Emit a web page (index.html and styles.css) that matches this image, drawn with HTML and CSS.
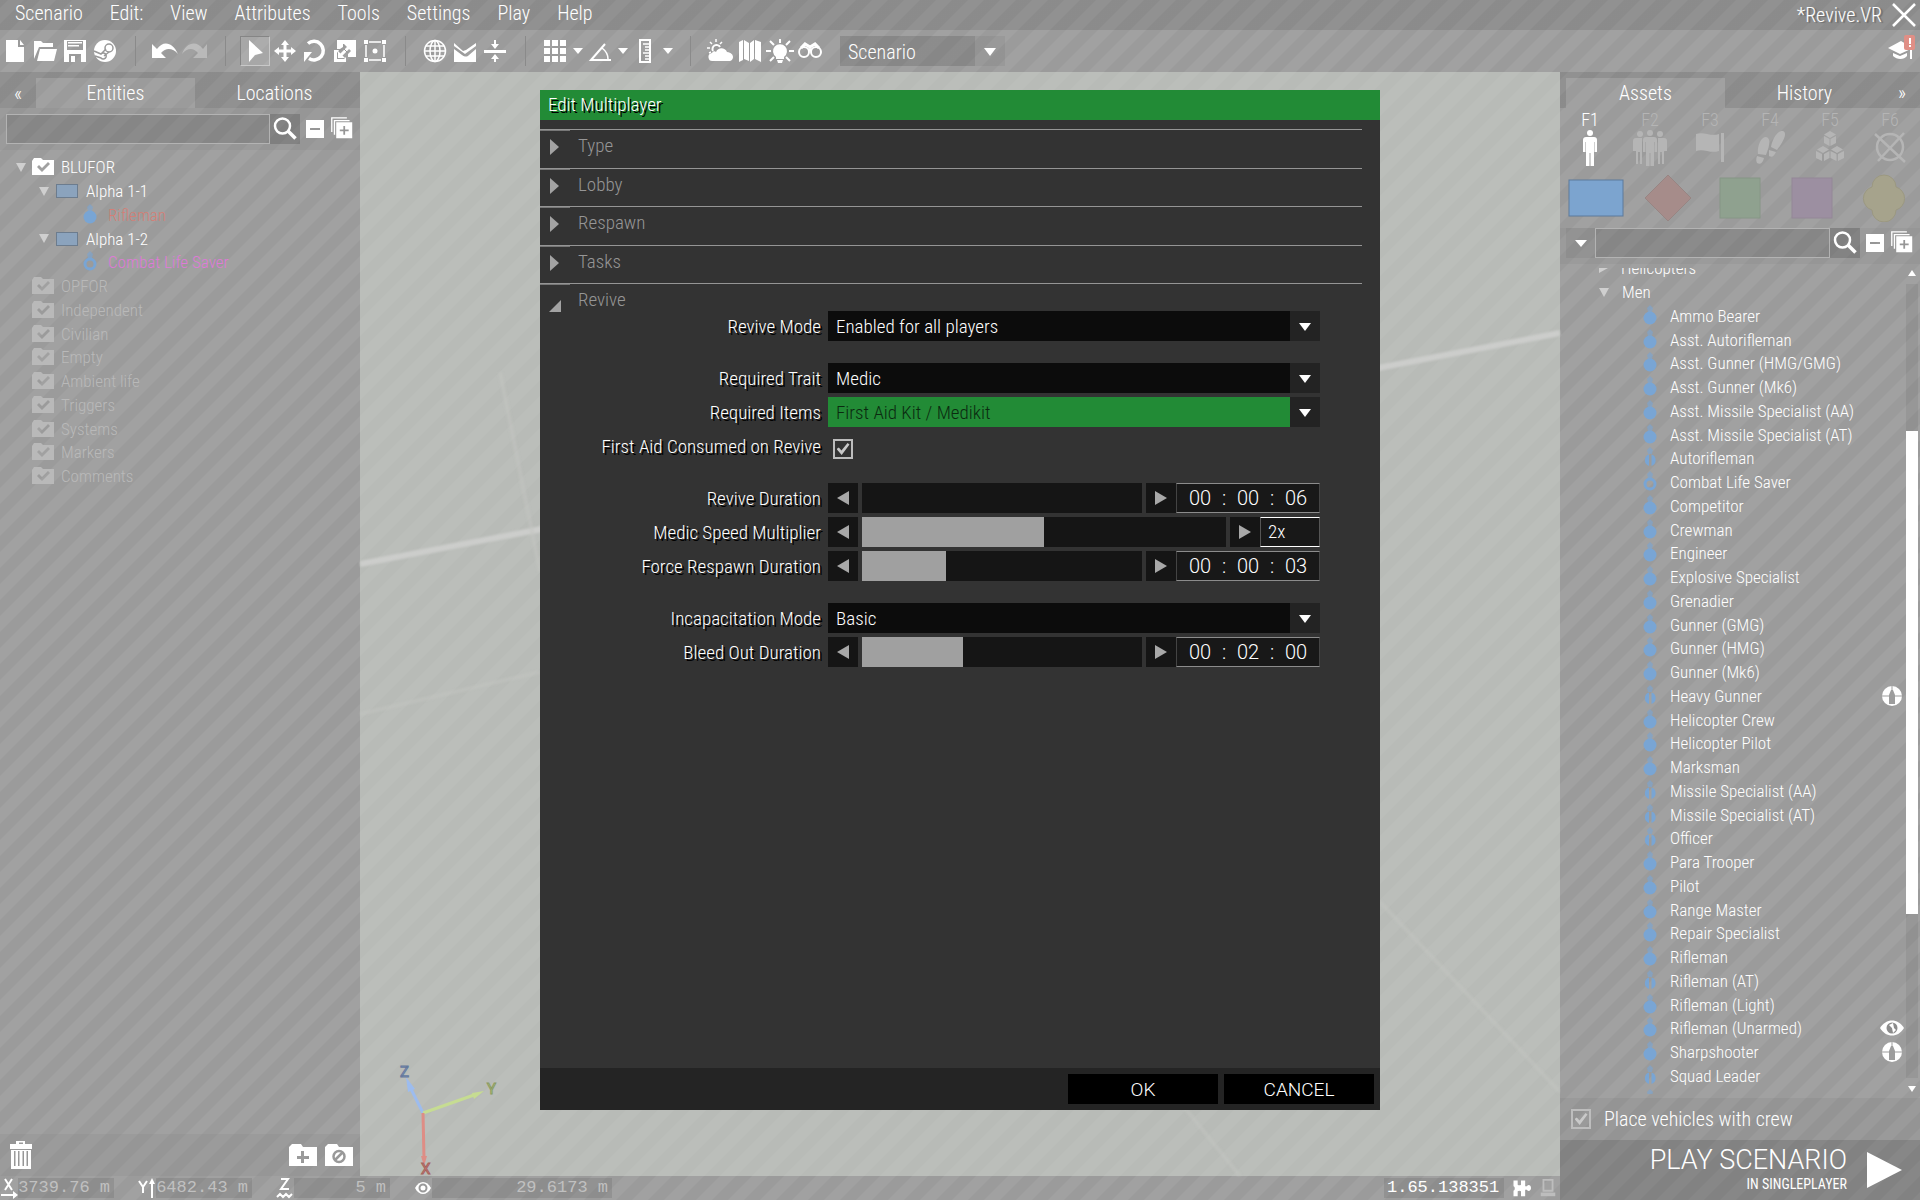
FILE: index.html
```html
<!DOCTYPE html>
<html lang="en">
<head>
<meta charset="utf-8">
<title>*Revive.VR</title>
<link rel="stylesheet" href="styles.css">
</head>
<body>
<svg class="defs" aria-hidden="true">
  <symbol id="unit" viewBox="0 0 24 24"><circle cx="12" cy="14" r="6.500"/><path d="M12 1l3 3-1 4h-4L9 4z" opacity=".6"/></symbol>
  <symbol id="unit-ring" viewBox="0 0 24 24"><circle cx="12" cy="14" r="5" fill="none" stroke="currentColor" stroke-width="3"/><path d="M12 1l3 3-1 4h-4L9 4z" opacity=".6"/></symbol>
  <symbol id="unit-split" viewBox="0 0 24 24"><path d="M11 8.500v11.400A6 6 0 0 1 11 8.500zM13.500 8.500v11.400a6 6 0 0 0 0-11.400z"/><path d="M12 1l3 3-1 4h-4L9 4z" opacity=".6"/></symbol>
  <symbol id="folder" viewBox="0 0 24 24"><path fill-rule="evenodd" d="M1 6l2-3h7l2 2h11v15H1zM6 12l5 5 8-8-2-2-6 6-3-3z"/></symbol>
  <symbol id="search" viewBox="0 0 24 24"><circle cx="9.500" cy="9" r="7.500" fill="none" stroke="currentColor" stroke-width="2.500"/><path d="M15 14l7.500 7.500" stroke="currentColor" stroke-width="3.500"/></symbol>
  <symbol id="minus" viewBox="0 0 24 24"><path fill-rule="evenodd" d="M3 3h18v18H3zM7 11v2h10v-2z"/></symbol>
  <symbol id="plus" viewBox="0 0 25 27"><path d="M1 17V1h17M4 20V4h17" fill="none" stroke="currentColor" stroke-width="1.500"/><path fill-rule="evenodd" d="M6 6h18v18H6zM14 10v4h-4v2h4v4h2v-4h4v-2h-4v-4z"/></symbol>
  <symbol id="target" viewBox="0 0 24 24"><circle cx="12" cy="12" r="10"/><path d="M2 12h20M12 2v5" stroke="#9d9d9d" stroke-width="1"/><path d="M9 20v-9l2-5h2l2 5v9z" fill="#9d9d9d"/></symbol>
</svg>

<header class="menubar">
  <nav>
    <button>Scenario</button><button>Edit:</button><button>View</button><button>Attributes</button><button>Tools</button><button>Settings</button><button>Play</button><button>Help</button>
  </nav>
  <span class="mission">*Revive.VR</span>
  <button class="close" aria-label="Close"><svg viewBox="0 0 24 24"><path d="M1 1l22 22M23 1L1 23" stroke="currentColor" stroke-width="2.500"/></svg></button>
</header>

<div class="toolbar">
  <button class="tool" aria-label="New"><svg viewBox="0 0 24 24"><path d="M3 1h12v7h6v15H3zM17 1l4 5h-4z"/></svg></button>
  <button class="tool" aria-label="Open"><svg viewBox="0 0 24 24"><path d="M1 20V2h7l2 2h10v4H6zM4 22L7 10h17l-3 12z"/></svg></button>
  <button class="tool" aria-label="Save"><svg viewBox="0 0 24 24"><path fill-rule="evenodd" d="M1 1h22v22H1zM4 2v9h16V2zM6 15v8h12v-8zM8 17h4v6H8z"/><path d="M5 3h14v1.500H5zM5 6h11v1.500H5z"/></svg></button>
  <button class="tool" aria-label="Workshop"><svg viewBox="0 0 24 24"><circle cx="12" cy="12" r="11"/><circle cx="16" cy="9" r="4" fill="none" stroke="#999" stroke-width="1.500"/><path d="M1 12l7 3a3 3 0 1 1 0 4l-6-2M8 15l5-5M11 17l5-4" fill="none" stroke="#999" stroke-width="1.500"/></svg></button>
  <span class="sep"></span>
  <button class="tool wide" aria-label="Undo"><svg viewBox="0 0 28 24"><path d="M1 5v14h14l-5-5c5-6 12-5 17 1C22 3 12 1 6 10z"/></svg></button>
  <button class="tool wide" disabled aria-label="Redo"><svg viewBox="0 0 28 24"><path d="M26 5v14H12l5-5C12 8 6 9 1 15 5 3 16 1 22 10z"/></svg></button>
  <span class="sep"></span>
  <button class="tool active" aria-label="Select"><svg viewBox="0 0 24 24"><path d="M6 1l14 13-8 2-6 7z"/></svg></button>
  <button class="tool" aria-label="Move"><svg viewBox="0 0 24 24"><path d="M12 1l4 5h-2.500v4.500H18V8l5 4-5 4v-2.500h-4.500V18H16l-4 5-4-5h2.500v-4.500H6V16l-5-4 5-4v2.500h4.500V6H8z"/></svg></button>
  <button class="tool" aria-label="Rotate"><svg viewBox="0 0 24 24"><path d="M5 4.500a9.300 9.300 0 1 1 1 15" fill="none" stroke="currentColor" stroke-width="3.500"/><path d="M1 23V13h8z"/></svg></button>
  <button class="tool" aria-label="Scale"><svg viewBox="0 0 24 24"><path fill-rule="evenodd" d="M4 1h19v17h-8v-3l3-3V5h-8v3l-3 2H4z"/><path fill-rule="evenodd" d="M1 11h5l-2 3v6h7l2-2v5H1z"/><path d="M6 18l11-11" stroke="currentColor" stroke-width="3"/><path d="M11 5h8v8zM5 12v7h7z"/><path d="M11 10l4 4" stroke="#999" stroke-width="1"/></svg></button>
  <button class="tool" aria-label="Area"><svg viewBox="0 0 24 24"><path d="M3 6v12M21 6v12M6 3h12M6 21h12" stroke="currentColor" stroke-width="1.500"/><path d="M1 1h4v4H1zM19 1h4v4h-4zM1 19h4v4H1zM19 19h4v4h-4z"/><circle cx="12" cy="12" r="2.500"/></svg></button>
  <span class="sep"></span>
  <button class="tool" aria-label="Coordinate space"><svg viewBox="0 0 24 24" fill="none" stroke="currentColor" stroke-width="1.500"><circle cx="12" cy="12" r="10.500"/><ellipse cx="12" cy="12" rx="5" ry="10.500"/><path d="M12 1v22M1 12h22M3 7h18M3 17h18"/></svg></button>
  <button class="tool" aria-label="Surface snapping"><svg viewBox="0 0 24 24"><path d="M1 4l9 8 3-1 10-7v3L12 15 1 7z"/><path d="M1 10l8 6c3 2 5 2 7 0l7-6v13H1z"/></svg></button>
  <button class="tool" aria-label="Vertical mode"><svg viewBox="0 0 24 24"><path d="M1 11h22v3H1zM11 1h2v4h3l-4 5-4-5h3zM11 23h2v-3h3l-4-5-4 5h3z"/></svg></button>
  <span class="sep"></span>
  <button class="tool" aria-label="Grid"><svg viewBox="0 0 24 24"><path d="M1 1h6v6H1zM9 1h6v6H9zM17 1h6v6h-6zM1 9h6v6H1zM9 9h6v6H9zM17 9h6v6h-6zM1 17h6v6H1zM9 17h6v6H9zM17 17h6v6h-6z"/></svg></button>
  <button class="tool drop" aria-label="Grid size"><i class="caret"></i></button>
  <button class="tool" aria-label="Angle"><svg viewBox="0 0 24 24" fill="none" stroke="currentColor" stroke-width="2"><path d="M17 5L3 21h20"/><path d="M14 9c4 3 6 6 6 11" stroke-width="1.500"/></svg></button>
  <button class="tool drop" aria-label="Angle step"><i class="caret"></i></button>
  <button class="tool" aria-label="Scale snapping"><svg viewBox="0 0 24 24" fill="none" stroke="currentColor" stroke-width="2"><path d="M7 1h10v22H7z"/><path d="M10 5h6M12 8h4M12 11h4M10 14h6M12 17h4M12 20h4" stroke-width="1.500"/></svg></button>
  <button class="tool drop" aria-label="Scale step"><i class="caret"></i></button>
  <span class="sep"></span>
  <button class="tool wide" aria-label="Weather"><svg viewBox="0 0 28 24"><path d="M7 22a4 4 0 0 1-1-8c1-2 3-2 4-1 2-5 9-5 11 0 8 1 7 8 3 9z"/><path d="M7 12a4 4 0 1 1 7-4" fill="none" stroke="currentColor" stroke-width="2"/><path d="M10 0v3M4 3l2 2M16 3l-2 2M1 9h3M3 14l2-1" stroke="currentColor" stroke-width="1.500"/></svg></button>
  <button class="tool" aria-label="Map"><svg viewBox="0 0 24 24"><path d="M1 3l4-2v20l-4 2zM6 1l5 3v18l-5-2zM12 4l4-3v19l-4 3zM17 1l6 2v20l-6-3z"/></svg></button>
  <button class="tool wide" aria-label="Lighting"><svg viewBox="0 0 28 24"><path d="M10 18a7 7 0 1 1 8 0v2h-8zM11 21h6l-1 3h-4z"/><path d="M14 0v4M4 2l4 4M24 2l-4 4M0 12h5M23 12h5M4 22l4-4M24 22l-4-4" stroke="currentColor" stroke-width="2"/></svg></button>
  <button class="tool" aria-label="Vision"><svg viewBox="0 0 24 24" fill="none" stroke="currentColor" stroke-width="2"><circle cx="6" cy="13" r="5"/><circle cx="18" cy="13" r="5"/><path d="M3 9l4-4 5 3 5-3 4 4M10 11h4" stroke-width="3"/></svg></button>
  <div class="select phase"><select aria-label="Phase"><option>Scenario</option></select></div>
  <button class="tutorial" aria-label="Tutorials"><svg viewBox="0 0 28 26"><path d="M1 13l13-7 12 7-13 6z"/><path d="M6 18l7 3 7-3v3c-3 4-10 4-14 0zM23 15h2v9h-2z"/><rect x="17" y="0" width="11" height="15" rx="2" fill="#e08f86"/><path d="M22 3h2v6h-2zM22 10h2v2h-2z"/></svg></button>
</div>

<div class="workspace">
  <div class="stage">
    <div class="canvas">
      <aside class="panel left">
        <div class="tabs"><button class="fold">«</button><button class="tab on">Entities</button><button class="tab">Locations</button></div>
        <div class="find">
          <input type="text" aria-label="Search entities"><button class="go" aria-label="Search"><svg><use href="#search"/></svg></button><button class="mini" aria-label="Collapse all"><svg><use href="#minus"/></svg></button><button class="mini" aria-label="Expand all"><svg><use href="#plus"/></svg></button>
        </div>
        <ul class="tree">
          <li><i class="open"></i><svg><use href="#folder"/></svg>BLUFOR</li>
          <li class="l1"><i class="open"></i><b class="group"></b>Alpha 1-1</li>
          <li class="l2 player"><svg class="u"><use href="#unit"/></svg>Rifleman</li>
          <li class="l1"><i class="open"></i><b class="group"></b>Alpha 1-2</li>
          <li class="l2 playable"><svg class="u"><use href="#unit-ring"/></svg>Combat Life Saver</li>
          <li class="dim"><svg><use href="#folder"/></svg>OPFOR</li>
          <li class="dim"><svg><use href="#folder"/></svg>Independent</li>
          <li class="dim"><svg><use href="#folder"/></svg>Civilian</li>
          <li class="dim"><svg><use href="#folder"/></svg>Empty</li>
          <li class="dim"><svg><use href="#folder"/></svg>Ambient life</li>
          <li class="dim"><svg><use href="#folder"/></svg>Triggers</li>
          <li class="dim"><svg><use href="#folder"/></svg>Systems</li>
          <li class="dim"><svg><use href="#folder"/></svg>Markers</li>
          <li class="dim"><svg><use href="#folder"/></svg>Comments</li>
        </ul>
        <div class="layers">
          <button aria-label="Delete"><svg viewBox="0 0 28 28"><path fill-rule="evenodd" d="M9 0h9v3h7v5H3V3h6zM12 1.500V3h4V1.500zM4 9h20v19H4zM7 10v15h1.500V10zM11 10v15h1.500V10zM15.500 10v15H17V10zM19.500 10v15H21V10z"/></svg></button>
          <span class="grow"></span>
          <button aria-label="New layer"><svg viewBox="0 0 28 28"><path fill-rule="evenodd" d="M0 6l3-3h9l2 3h14v19H0zM12 10v5H8v3h4v4h3v-4h5v-3h-5v-5z"/></svg></button>
          <button aria-label="Remove layer"><svg viewBox="0 0 28 28"><path d="M0 6l3-3h9l2 3h14v19H0z"/><circle cx="14" cy="15.500" r="5.500" fill="none" stroke="#999" stroke-width="2.500"/><path d="M10 19l8-8" stroke="#999" stroke-width="2.500"/></svg></button>
        </div>
      </aside>
      <main class="view">
        <svg class="ground" viewBox="0 0 1200 1104" preserveAspectRatio="none">
          <path d="M0 492L1200 261" stroke="#cccdcb" stroke-width="6"/>
          <path d="M0 642L180 600M1020 830l180 190M820 1030l60 74M140 300l40 200" stroke="#c3c5c2" stroke-width="4" opacity=".5" fill="none"/>
        </svg>
        <svg class="axes" viewBox="0 0 110 117">
          <g fill="none" stroke-width="3"><path d="M33 54L19 26" stroke="#9dbcee"/><path d="M33 54L84 36" stroke="#c6dc92"/><path d="M33 54L34 100" stroke="#de8d85"/></g>
          <path d="M16 18l9 12-7 3z" fill="#9dbcee"/><path d="M94 32l-10 8-2-6z" fill="#c6dc92"/><path d="M34 107l-3-10h6z" fill="#de8d85"/>
          <text x="10" y="18" fill="#90addb" stroke="#66799c">Z</text><text x="97" y="35" fill="#c6dc92" stroke="#8a9a62">Y</text><text x="31" y="115" fill="#de8d85" stroke="#a5625c">X</text>
        </svg>
      </main>
    </div>
    <footer class="status">
      <label for="sx"><svg viewBox="0 0 18 24"><path d="M5 3l7 11M12 3L5 14" stroke="currentColor" stroke-width="2"/><path d="M1 18h12v-3l5 4-5 4v-3H1z"/></svg></label><input id="sx" value="3739.76 m">
      <label for="sy"><svg viewBox="0 0 18 24"><path d="M1 5l4 6 4-6M5 10v7" fill="none" stroke="currentColor" stroke-width="2"/><path d="M14 2l3 6h-2v14h-2V8h-2z"/></svg></label><input id="sy" value="6482.43 m">
      <label for="sz"><svg viewBox="0 0 18 24" fill="none" stroke="currentColor"><path d="M5 3h7L5 13h8" stroke-width="2"/><path d="M1 21l3-3 3 3 3-3 3 3 3-3" stroke-width="2"/></svg></label><input id="sz" value="5 m">
      <label for="sd"><svg viewBox="0 0 18 24"><path d="M1 12c4-8 12-8 16 0-4 8-12 8-16 0z"/><circle cx="9" cy="12" r="3.500" fill="none" stroke="#999" stroke-width="2"/></svg></label><input id="sd" class="long" value="29.6173 m">
      <output>1.65.138351</output>
      <svg class="mod" viewBox="0 0 24 24"><path fill-rule="evenodd" d="M3 3h5v5c1 1 3 1 4 0V3h5v7h2c2-3 5-1 5 2s-3 5-5 2h-2v8h-5v-6c-1-1-3-1-4 0v6H3v-7c2 0 2-5 0-5z"/></svg>
      <svg class="net" viewBox="0 0 18 22" fill="none" stroke="currentColor" stroke-width="2"><path d="M4 2h10v12H4z"/><path d="M1 18h16" stroke-width="4"/></svg>
    </footer>
  </div>

  <aside class="panel right">
    <div class="tabs"><button class="tab on">Assets</button><button class="tab">History</button><button class="fold">»</button></div>
    <div class="modes">
      <button class="on">F1<svg viewBox="0 0 36 36"><circle cx="18" cy="3" r="3"/><path d="M14 7h8c2 0 3 1 3 3v12h-2.500V12H22v24h-3.500V23h-1v13H14V12h-.500v10H11V10c0-2 1-3 3-3z"/></svg></button>
      <button>F2<svg viewBox="0 0 36 36"><circle cx="18" cy="3" r="3"/><path d="M14 7h8c2 0 3 1 3 3v12h-2.500V12H22v24h-3.500V23h-1v13H14V12h-.500v10H11V10c0-2 1-3 3-3z"/><circle cx="8" cy="4" r="3"/><circle cx="28" cy="4" r="3"/><path d="M4 8h6v26H8V22H6v12H4V21H1V11c0-2 1-3 3-3zM32 8h-6v26h2V22h2v12h2V21h3V11c0-2-1-3-3-3z"/></svg></button>
      <button>F3<svg viewBox="0 0 36 36"><path d="M4 4c8-3 14 3 23 0v17c-9 3-15-3-23 0zM29 3h3v29h-3z"/></svg></button>
      <button>F4<svg viewBox="0 0 36 36"><path d="M6 24c-1-6 2-17 8-17 5 1 4 8 0 18zM5 26l7 2c-1 5-4 7-7 5-1-2-1-4 0-7zM19 17c1-7 6-17 12-16 5 2 0 11-6 19zM17 20l7 2c-2 4-4 6-7 4z"/></svg></button>
      <button>F5<svg viewBox="0 0 36 36"><path d="M18 1l6 3.500-6 3.500-6-3.500zM12 6l5.500 3v7L12 13zM24 6l-5.500 3v7l5.500-3zM11 16l6 3.500-6 3.500-6-3.500zM4 21l6 3v7l-6-3zM17.500 21L12 24v7l5.500-3zM25 16l6 3.500-6 3.500-6-3.500zM18.500 21l6 3v7l-6-3zM32 21l-6 3v7l6-3z"/></svg></button>
      <button>F6<svg viewBox="0 0 36 36" fill="none" stroke="currentColor" stroke-width="2.500"><circle cx="18" cy="17" r="13"/><path d="M3 4l30 28M32 3L6 31"/></svg></button>
    </div>
    <div class="sides">
      <button aria-label="BLUFOR"><svg viewBox="0 0 56 48"><rect x="1" y="6" width="54" height="36" fill="#7ca4cf" stroke="#5c7a9c"/></svg></button>
      <button aria-label="OPFOR"><svg viewBox="0 0 56 48"><path d="M28 1l23 23-23 23L5 24z" fill="#a68c8a" stroke="#978583"/></svg></button>
      <button aria-label="Independent"><svg viewBox="0 0 56 48"><rect x="8" y="4" width="40" height="40" fill="#8fa18f" stroke="#869686"/></svg></button>
      <button aria-label="Civilian"><svg viewBox="0 0 56 48"><rect x="8" y="4" width="40" height="40" fill="#9c8fa1" stroke="#948797"/></svg></button>
      <button aria-label="Empty"><svg viewBox="0 0 56 48"><path d="M16 13a12 12 0 0 1 24 0 12 12 0 0 1 0 23 12 12 0 0 1-24 0 12 12 0 0 1 0-23z" fill="#a6a38c" stroke="#9b9881"/></svg></button>
    </div>
    <div class="find">
      <button class="pick" aria-label="Search filter"><i class="caret"></i></button><input type="text" aria-label="Search assets"><button class="go" aria-label="Search"><svg><use href="#search"/></svg></button><button class="mini" aria-label="Collapse all"><svg><use href="#minus"/></svg></button><button class="mini" aria-label="Expand all"><svg><use href="#plus"/></svg></button>
    </div>
    <div class="assets">
      <div class="clip"><ul class="tree">
        <li class="cat"><i class="shut"></i>Helicopters</li>
        <li class="cat"><i class="open"></i>Men</li>
        <li><svg class="u"><use href="#unit"/></svg>Ammo Bearer</li>
        <li><svg class="u"><use href="#unit"/></svg>Asst. Autorifleman</li>
        <li><svg class="u"><use href="#unit"/></svg>Asst. Gunner (HMG/GMG)</li>
        <li><svg class="u"><use href="#unit"/></svg>Asst. Gunner (Mk6)</li>
        <li><svg class="u"><use href="#unit"/></svg>Asst. Missile Specialist (AA)</li>
        <li><svg class="u"><use href="#unit"/></svg>Asst. Missile Specialist (AT)</li>
        <li><svg class="u"><use href="#unit-split"/></svg>Autorifleman</li>
        <li><svg class="u"><use href="#unit-ring"/></svg>Combat Life Saver</li>
        <li><svg class="u"><use href="#unit"/></svg>Competitor</li>
        <li><svg class="u"><use href="#unit"/></svg>Crewman</li>
        <li><svg class="u"><use href="#unit"/></svg>Engineer</li>
        <li><svg class="u"><use href="#unit"/></svg>Explosive Specialist</li>
        <li><svg class="u"><use href="#unit"/></svg>Grenadier</li>
        <li><svg class="u"><use href="#unit"/></svg>Gunner (GMG)</li>
        <li><svg class="u"><use href="#unit"/></svg>Gunner (HMG)</li>
        <li><svg class="u"><use href="#unit"/></svg>Gunner (Mk6)</li>
        <li><svg class="u"><use href="#unit-split"/></svg>Heavy Gunner<svg class="dlc"><use href="#target"/></svg></li>
        <li><svg class="u"><use href="#unit"/></svg>Helicopter Crew</li>
        <li><svg class="u"><use href="#unit"/></svg>Helicopter Pilot</li>
        <li><svg class="u"><use href="#unit"/></svg>Marksman</li>
        <li><svg class="u"><use href="#unit-split"/></svg>Missile Specialist (AA)</li>
        <li><svg class="u"><use href="#unit-split"/></svg>Missile Specialist (AT)</li>
        <li><svg class="u"><use href="#unit-split"/></svg>Officer</li>
        <li><svg class="u"><use href="#unit"/></svg>Para Trooper</li>
        <li><svg class="u"><use href="#unit"/></svg>Pilot</li>
        <li><svg class="u"><use href="#unit"/></svg>Range Master</li>
        <li><svg class="u"><use href="#unit"/></svg>Repair Specialist</li>
        <li><svg class="u"><use href="#unit"/></svg>Rifleman</li>
        <li><svg class="u"><use href="#unit-split"/></svg>Rifleman (AT)</li>
        <li><svg class="u"><use href="#unit"/></svg>Rifleman (Light)</li>
        <li><svg class="u"><use href="#unit"/></svg>Rifleman (Unarmed)<svg class="dlc" viewBox="0 0 24 24"><path d="M0 12C6 2 18 2 24 12 18 22 6 22 0 12z"/><circle cx="12" cy="12" r="5.500" fill="#8c8c8c"/><path d="M9 9l4-2 1 5 2 2-3 3-1-5z"/></svg></li>
        <li><svg class="u"><use href="#unit"/></svg>Sharpshooter<svg class="dlc"><use href="#target"/></svg></li>
        <li><svg class="u"><use href="#unit-split"/></svg>Squad Leader</li>
        <li><svg class="u"><use href="#unit"/></svg>Survivor</li>
      </ul></div>
      <div class="scroll"><i class="up"></i><div class="rail"><div class="thumb"></div></div><i class="down"></i></div>
    </div>
    <label class="crew"><input type="checkbox" checked>Place vehicles with crew</label>
    <button class="play"><span><strong>PLAY SCENARIO</strong><small>IN SINGLEPLAYER</small></span><i></i></button>
  </aside>
</div>

<form class="dialog" role="dialog" aria-labelledby="dt">
  <h1 id="dt">Edit Multiplayer</h1>
  <div class="sections">
    <button type="button" class="section"><i></i>Type</button>
    <button type="button" class="section"><i></i>Lobby</button>
    <button type="button" class="section"><i></i>Respawn</button>
    <button type="button" class="section"><i></i>Tasks</button>
    <button type="button" class="section expanded"><i></i>Revive</button>
    <div class="fields">
      <label for="mode">Revive Mode</label><div class="select"><select id="mode"><option>Enabled for all players</option></select></div>
      <label class="first" for="trait">Required Trait</label><div class="select first"><select id="trait"><option>Medic</option></select></div>
      <label for="items">Required Items</label><div class="select chosen"><select id="items"><option>First Aid Kit / Medikit</option></select></div>
      <label for="consume">First Aid Consumed on Revive</label><div class="check"><input type="checkbox" id="consume" checked></div>
      <label class="first" for="revdur">Revive Duration</label>
      <div class="slider first"><button type="button" class="step" aria-label="Less"><i></i></button><input type="range" id="revdur" value="0" style="--fill:0%"><button type="button" class="step more" aria-label="More"><i></i></button><div class="time"><input aria-label="Hours" value="00">:<input aria-label="Minutes" value="00">:<input aria-label="Seconds" value="06"></div></div>
      <label for="speed">Medic Speed Multiplier</label>
      <div class="slider"><button type="button" class="step" aria-label="Less"><i></i></button><input type="range" id="speed" value="50" style="--fill:50%"><button type="button" class="step more" aria-label="More"><i></i></button><input class="value" aria-label="Multiplier" value="2x"></div>
      <label for="force">Force Respawn Duration</label>
      <div class="slider"><button type="button" class="step" aria-label="Less"><i></i></button><input type="range" id="force" value="30" style="--fill:30%"><button type="button" class="step more" aria-label="More"><i></i></button><div class="time"><input aria-label="Hours" value="00">:<input aria-label="Minutes" value="00">:<input aria-label="Seconds" value="03"></div></div>
      <label class="first" for="incap">Incapacitation Mode</label><div class="select first"><select id="incap"><option>Basic</option></select></div>
      <label for="bleed">Bleed Out Duration</label>
      <div class="slider"><button type="button" class="step" aria-label="Less"><i></i></button><input type="range" id="bleed" value="36" style="--fill:36%"><button type="button" class="step more" aria-label="More"><i></i></button><div class="time"><input aria-label="Hours" value="00">:<input aria-label="Minutes" value="02">:<input aria-label="Seconds" value="00"></div></div>
    </div>
  </div>
  <div class="actions"><button type="submit">OK</button><button type="button">CANCEL</button></div>
</form>
</body>
</html>
```
FILE: styles.css
```css
:root {
  --stripes: linear-gradient(135deg, #9b9b9b 11%, #a1a1a1 14% 36%, #9b9b9b 39% 61%, #a1a1a1 64% 86%, #9b9b9b 89%);
  --shade: linear-gradient(rgba(0, 0, 0, .1), rgba(0, 0, 0, .1));
}
* { box-sizing: border-box; }
body {
  margin: 0;
  height: 100vh;
  display: flex;
  flex-direction: column;
  overflow: hidden;
  position: relative;
  color: #fff;
  font: 300 20px/24px "Roboto Condensed", Roboto, sans-serif;
  background: #9e9e9e;
}
button, input, select { font: inherit; color: inherit; border: 0; padding: 0; margin: 0; background: none; border-radius: 0; }
button { display: flex; align-items: center; justify-content: center; }
svg { display: block; }
svg:not([fill]) { fill: currentColor; }
i { display: block; }
.defs { position: absolute; width: 0; height: 0; }
.caret { width: 0; border: 6px solid transparent; border-top: 7px solid #fff; border-bottom: 0; }

.toolbar, .panel, .status, .tab.on {
  background-image: var(--stripes);
  background-size: 32px 32px;
  background-attachment: fixed;
}
.menubar, .tabs { background-image: var(--shade), var(--stripes); background-size: auto, 32px 32px; background-attachment: fixed; }
.menubar { height: 30px; display: flex; align-items: center; padding: 0 2px 4px 15px; flex: none; }
.menubar nav { display: flex; gap: 27px; flex: 1; }
.mission { padding: 4px 10px 0 0; text-shadow: 2px 1px 1px rgba(0, 0, 0, .25); }
.close { padding: 4px 2px 0 0; }
.close svg { width: 24px; height: 24px; }

.toolbar { height: 42px; display: flex; align-items: center; flex: none; }
.tool { width: 30px; height: 30px; }
.tool svg { width: 24px; height: 24px; }
.tool.wide svg { width: 28px; }
.tool.drop { width: 15px; }
.drop .caret { border-width: 6px 5px 0; }
.tool:disabled { opacity: .3; }
.tool.active { background: rgba(255, 255, 255, .12); border: 1px solid; border-color: #858585 #c8c8c8 #c8c8c8 #858585; }
.sep { width: 30px; height: 30px; display: flex; justify-content: center; }
.sep::before { content: ""; width: 1px; background: #8a8a8a; }
.select { position: relative; height: 30px; display: flex; }
.select select { appearance: none; flex: 1; min-width: 0; padding: 1px 38px 0 8px; }
.select::before { content: ""; position: absolute; right: 0; width: 30px; height: 30px; pointer-events: none; }
.select::after { content: ""; position: absolute; right: 9px; top: 12px; border: 6px solid transparent; border-top: 8px solid #fff; border-bottom: 0; pointer-events: none; }
.phase { width: 165px; margin-left: 15px; }
.phase select { background: linear-gradient(to left, rgba(0, 0, 0, .05) 30px, rgba(0, 0, 0, .13) 30px); }
.tutorial { margin-left: auto; padding: 0 5px 6px 0; }
.tutorial svg { width: 28px; height: 26px; }

.workspace { flex: 1; display: flex; min-height: 0; }
.stage { flex: 1; display: flex; flex-direction: column; min-width: 0; }
.canvas { flex: 1; display: flex; min-height: 0; }
.panel { width: 360px; display: flex; flex-direction: column; flex: none; }
.tabs { height: 36px; display: flex; padding: 6px 6px 0 0; flex: none; }
.right .tabs { padding: 6px 0 0 6px; }
.tab { flex: 1; }
.fold { width: 36px; }
.find { height: 42px; flex: none; display: flex; align-items: center; padding: 0 6px; background: rgba(0, 0, 0, .03); }
.right .find { height: 36px; padding-bottom: 6px; }
.find input { flex: 1; min-width: 0; height: 30px; border: 1px solid #b3b3b3; background: rgba(0, 0, 0, .1); padding: 0 8px; }
.go { width: 30px; height: 30px; background: rgba(0, 0, 0, .15); }
.pick { width: 29px; height: 30px; background: rgba(0, 0, 0, .05); }
.go svg, .mini svg { width: 24px; height: 24px; }
.mini { width: 30px; height: 30px; }
.mini:last-child { width: 24px; }
.tree { list-style: none; margin: 0; padding: 0; font-size: 17px; }
.tree li { height: 24px; display: flex; align-items: center; }
.tree li:nth-child(4n) { height: 23px; }
.tree svg { width: 24px; height: 24px; margin-right: 6px; flex: none; }
.tree .open { border: 5px solid transparent; border-top: 9px solid #cfcfcf; border-bottom: 0; margin-right: 5px; }
.tree .shut { border: 5px solid transparent; border-left: 9px solid #cfcfcf; border-right: 0; margin-right: 5px; }
.left .tree { flex: 1; padding: 5px 0 0 16px; }
.left .l1 { padding-left: 23px; }
.left .l2 { padding-left: 62px; }
.left .dim { padding-left: 15px; color: #b9b9b9; }
.group { width: 22px; height: 14px; background: #8ba3bd; border: 1px solid #6c7c8e; margin: 0 8px 0 2px; }
.player { color: #d37f76; }
.playable { color: #df7ad8; }
.tree .u { color: #79a5d4; }
.layers { height: 42px; display: flex; align-items: center; gap: 8px; padding: 0 7px; background: rgba(0, 0, 0, .03); flex: none; }
.layers svg { width: 28px; height: 28px; }
.grow { flex: 1; }

.view {
  flex: 1;
  position: relative;
  background: linear-gradient(135deg, #b8bbb7 11%, #bbbeba 14% 36%, #b8bbb7 39% 61%, #bbbeba 64% 86%, #b8bbb7 89%) fixed;
  background-size: 32px 32px;
}
.ground { width: 100%; height: 100%; filter: blur(1px); }
.axes { position: absolute; left: 30px; bottom: 0; width: 110px; height: 117px; font: 400 15px Roboto, sans-serif; stroke-width: 1; }

.modes { display: grid; grid-template-columns: repeat(6, 1fr); padding-top: 2px; font-size: 18px; line-height: 19px; }
.modes button { flex-direction: column; color: #b5b5b5; }
.modes .on { color: #fff; }
.modes svg { width: 36px; height: 36px; margin-top: 1px; }
.sides { display: grid; grid-template-columns: repeat(5, 1fr); padding: 8px 0 6px; }
.sides svg { width: 56px; height: 48px; }
.assets { flex: 1; min-height: 0; display: flex; padding: 4px 2px 4px 0; }
.clip { flex: 1; overflow: hidden; }
.clip .tree { margin-top: -12px; padding: 0 2px 0 78px; }
.clip .u { margin-right: 8px; }
.clip .cat { margin-left: -39px; }
.clip .cat i { margin-right: 13px; }
.clip .dlc { margin: 0 0 0 auto; }
.scroll { width: 12px; display: flex; flex-direction: column; align-items: center; }
.scroll .up { border: 4px solid transparent; border-bottom: 6px solid #fff; border-top: 0; margin: 2px 0 8px; }
.scroll .down { border: 4px solid transparent; border-top: 6px solid #fff; border-bottom: 0; margin: 8px 0 2px; }
.rail { flex: 1; width: 100%; background: rgba(0, 0, 0, .06); display: grid; grid-template-rows: 147fr 482fr 164fr; }
.thumb { grid-row: 2; background: #fff; }
.crew { height: 42px; display: flex; align-items: center; gap: 13px; padding-left: 11px; background: rgba(0, 0, 0, .04); flex: none; }
input[type="checkbox"] { appearance: none; width: 20px; height: 20px; border: 2px solid #bdbdbd; display: grid; place-items: center; }
input[type="checkbox"]:checked::before { content: ""; width: 13px; height: 12px; background: #c9c9c9; clip-path: polygon(0 50%, 18% 38%, 38% 62%, 85% 0, 100% 12%, 40% 100%); }
.play { height: 60px; flex: none; background: rgba(0, 0, 0, .16); justify-content: flex-end; gap: 20px; padding-right: 18px; text-align: right; }
.play strong { display: block; font: 300 27px/28px Roboto, sans-serif; }
.play small { display: block; font: 400 14px/20px "Roboto Condensed", sans-serif; }
.play i { border: 18px solid transparent; border-left: 35px solid #fff; border-right: 0; }

.status { height: 24px; flex: none; display: flex; align-items: center; font: 400 17px/20px "Liberation Mono", monospace; }
.status label svg { width: 18px; height: 24px; }
.status input { width: 96px; height: 20px; text-align: right; padding-right: 4px; background: rgba(0, 0, 0, .09); color: #c0c0c0; margin-right: 24px; }
.status .long { width: 180px; }
.status output { margin-left: auto; width: 120px; height: 20px; padding-left: 3px; background: rgba(0, 0, 0, .09); }
.mod { width: 24px; height: 20px; margin: 0 6px 0 5px; }
.net { width: 18px; height: 20px; margin-right: 3px; color: #bdbdbd; }

.dialog { position: absolute; left: 28.125%; right: 28.125%; top: 90px; bottom: 90px; display: flex; flex-direction: column; background: #333; font-size: 19px; }
.dialog h1 { margin: 0; height: 30px; padding: 3px 8px; font-size: 19px; font-weight: 300; line-height: 24px; background: #228b36; text-shadow: 2px 2px 0 #000; }
.sections { flex: 1; padding: 9px 18px 0 0; }
.section { position: relative; width: 100%; height: 39px; border-top: 1px solid #959595; color: #969696; justify-content: flex-start; align-items: flex-start; padding: 4px 0 0 10px; }
.section:nth-child(even) { height: 38px; }
.section::before { content: ""; position: absolute; left: 0; top: 0; width: 30px; height: 1px; background: #777; }
.section i { width: 28px; height: 16px; margin-top: 5px; flex: none; }
.section i::before { content: ""; display: block; width: 0; border: 8px solid transparent; border-left: 9px solid #a3a3a3; border-right: 0; }
.section.expanded { height: 28px; padding-left: 9px; }
.section.expanded i { width: 29px; }
.section.expanded i::before { border: 0; width: 12px; height: 12px; background: #a3a3a3; clip-path: polygon(100% 0, 100% 100%, 0 100%); margin-top: 7px; }
.fields { display: grid; grid-template-columns: 1fr 492px; row-gap: 4px; padding-right: 42px; }
.fields label { text-align: right; padding-right: 7px; line-height: 32px; height: 30px; text-shadow: 2px 2px 0 #000; }
.fields .first { margin-top: 18px; }
.fields .select::before { background: #232323; }
.fields select { background: #0c0c0c; }
.fields .chosen select { background: #228b36; color: #0b2a10; }
.check { padding: 8px 0 0 5px; height: 30px; }
.slider { display: flex; height: 30px; }
.step { width: 30px; background: #151515; }
.step i { border: 7px solid transparent; border-right: 12px solid #a8a8a8; border-left: 0; }
.step.more i { border: 7px solid transparent; border-left: 12px solid #a8a8a8; border-right: 0; }
.slider input[type="range"] { appearance: none; flex: 1; min-width: 0; height: 30px; margin: 0 4px; background: linear-gradient(to right, #a0a0a0 var(--fill), #151515 var(--fill)); }
input[type="range"]::-webkit-slider-thumb { appearance: none; width: 0; height: 0; }
.time { width: 144px; display: grid; grid-template-columns: repeat(5, 24px); justify-content: center; align-items: center; text-align: center; font: 300 20px/28px Roboto, sans-serif; background: #181818; border: 1px solid #8c8c8c; border-left-color: #444; border-right-color: #444; }
.time input { width: 24px; text-align: center; }
.value { width: 60px; padding-left: 7px; background: #181818; border: 1px solid #fff; border-left-color: #555; border-right-color: #555; }
.actions { height: 42px; display: flex; gap: 6px; justify-content: flex-end; padding: 6px; background: #242424; font-family: Roboto, sans-serif; }
.actions button { width: 150px; height: 30px; background: #000; padding-top: 2px; }
```
